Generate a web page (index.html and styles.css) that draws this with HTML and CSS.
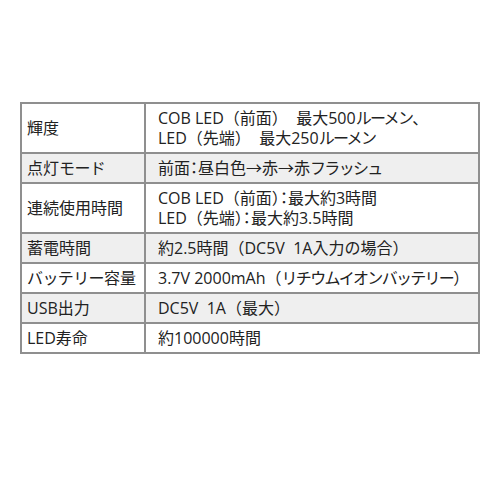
FILE: index.html
```html
<!DOCTYPE html>
<html lang="ja">
<head>
<meta charset="utf-8">
<link rel="stylesheet" href="styles.css">
</head>
<body>
<table class="spec">
  <tr class="tall">
    <th>輝度</th>
    <td>COB LED（前面）&nbsp; 最大500<span class="k">ルーメン</span>、<br>LED（先端）&nbsp; 最大250<span class="k">ルーメン</span></td>
  </tr>
  <tr class="alt">
    <th>点灯<span class="k">モード</span></th>
    <td>前面<span class="c">：</span>昼白色→赤→赤<span class="k">フラッシュ</span></td>
  </tr>
  <tr class="tall">
    <th>連続使用時間</th>
    <td>COB LED（前面）<span class="c">：</span>最大約3時間<br>LED（先端）<span class="c">：</span>最大約3.5時間</td>
  </tr>
  <tr class="alt">
    <th>蓄電時間</th>
    <td>約2.5時間（DC5V&nbsp; 1A入力の場合）</td>
  </tr>
  <tr>
    <th><span class="k">バッテリー</span>容量</th>
    <td>3.7V 2000mAh（<span class="k">リチウムイオンバッテリー</span>）</td>
  </tr>
  <tr class="alt">
    <th>USB出力</th>
    <td>DC5V&nbsp; 1A（最大）</td>
  </tr>
  <tr>
    <th>LED寿命</th>
    <td>約100000時間</td>
  </tr>
</table>
</body>
</html>
```
FILE: styles.css
```css
html, body {
  margin: 0;
  padding: 0;
  background: #ffffff;
}
body {
  padding: 102px 0 0 20px;
  font-family: "Open Sans", "Noto Sans CJK JP", sans-serif;
  font-size: 16px;
  color: #222222;
}
.spec {
  border-collapse: separate;
  border-spacing: 0;
  width: 460px;
  border-top: 2px solid #8f8f8f;
  border-left: 2px solid #8f8f8f;
  table-layout: fixed;
}
.spec th, .spec td {
  border-right: 2px solid #8f8f8f;
  border-bottom: 2px solid #8f8f8f;
  font-weight: normal;
  text-align: left;
  vertical-align: middle;
  line-height: 20px;
  height: 30px;
  padding: 0;
  box-sizing: border-box;
  white-space: nowrap;
  overflow: hidden;
}
.spec th {
  width: 124px;
  padding-left: 5px;
}
.spec td {
  padding-left: 12px;
}
.spec tr.tall th, .spec tr.tall td {
  height: 50px;
}
.spec tr.alt th, .spec tr.alt td {
  background: #efefef;
}
.k {
  letter-spacing: -1.7px;
}
.spec th .k {
  letter-spacing: -0.6px;
}
.c {
  font-feature-settings: "halt";
}
```
